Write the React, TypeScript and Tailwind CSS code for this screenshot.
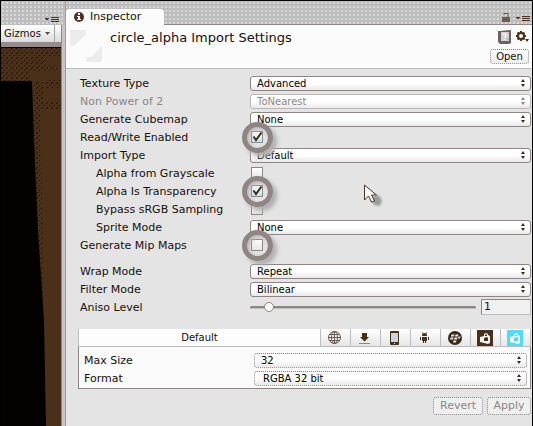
import type { ReactNode } from "react";
import { useState } from "react";

const dots =
  "bg-[#bdbdbd] bg-[radial-gradient(circle,#d8d8d8_1px,transparent_1px)] bg-[size:4px_4px]";

function Arrows() {
  return (
    <svg width="4" height="8" viewBox="0 0 4 8" fill="currentColor" className="pointer-events-none absolute right-[6px]" aria-hidden="true">
      <path d="M2 0L4 3H0zM0 5h4L2 8z" />
    </svg>
  );
}

function MenuLines() {
  return (
    <svg width="14" height="6" viewBox="0 0 14 6" fill="#4a3322" shapeRendering="crispEdges" aria-hidden="true">
      <path d="M0 1h4v1H3v1H1V2H0zM6 0h8v1H6zM6 2h8v1H6zM6 4h8v1H6z" />
    </svg>
  );
}

function Dropdown({ id, value, disabled = false, dotted = false, inset = false }: { id: string; value: string; disabled?: boolean; dotted?: boolean; inset?: boolean }) {
  return (
    <div className={`relative flex min-w-0 flex-1 items-center ${disabled ? "text-[#8f8583]" : "text-[#3c2a1c]"}`}>
      <select
        id={id}
        disabled={disabled}
        className={`h-[15px] w-full appearance-none rounded-[3px] border bg-linear-to-b from-white from-50% to-[#e9e9e9] text-[10px] leading-[13px] ${dotted ? "border-dotted" : ""} ${inset ? "pl-2" : "pl-[6px]"} ${disabled ? "border-[#bdb8b7] text-[#8f8583] opacity-100" : "border-[#8f8583] text-black"}`}
      >
        <option>{value}</option>
      </select>
      <Arrows />
    </div>
  );
}

function Row({ id, label, indent = false, muted = false, children }: { id: string; label: string; indent?: boolean; muted?: boolean; children: ReactNode }) {
  return (
    <div className="flex h-[18px] items-center">
      <label htmlFor={id} className={`w-[170px] shrink-0 pt-[2px] whitespace-nowrap ${indent ? "pl-4" : ""} ${muted ? "text-[#8f8583]" : ""}`}>
        {label}
      </label>
      {children}
    </div>
  );
}

function Tick({ id, on = false, ringed = false }: { id: string; on?: boolean; ringed?: boolean }) {
  return (
    <span className="relative ml-px flex size-3 items-center justify-center">
      <input
        id={id}
        type="checkbox"
        defaultChecked={on}
        className="peer size-3 appearance-none border border-[#8f8583] bg-linear-to-b from-white to-[#e6e6e6] checked:to-[#bfe3ea]"
      />
      <svg viewBox="0 0 12 12" className="pointer-events-none absolute z-20 hidden size-3 peer-checked:block" aria-hidden="true">
        <path d="M2.5 5.5L5 9l5.5-7.5" fill="none" stroke="#3c2a1c" strokeWidth="2" />
      </svg>
      {ringed && (
        <span className="pointer-events-none absolute z-10 size-[31px] rounded-full border-[5px] border-[#8f8583] shadow-[4px_4px_4px_#b0b0b0,inset_2px_2px_4px_#b5b5b5]" />
      )}
    </span>
  );
}

function Tab({ label, children }: { label: string; children: ReactNode }) {
  return (
    <button type="button" aria-label={label} className="flex w-[30px] items-center justify-center border-l border-[#bdbdbd] bg-linear-to-b from-white to-[#e6e6e6] pr-[2px]">
      {children}
    </button>
  );
}

function BagIcon({ back }: { back: string }) {
  return (
    <svg width="16" height="16" viewBox="0 0 16 16" aria-hidden="true">
      <path d="M0 0h16v16H0z" fill={back} />
      <path d="M3 7l4-1V4l2-1 2 1v1l2 1v7l-2 1-4-1-4-1z" fill="#f4f4f4" />
      <path d="M8 5l1-1 1 1v1H8zM7 8l3-1 1 1v3H7z" fill={back} />
    </svg>
  );
}

function PlatformTabs() {
  return (
    <div className="flex h-[18px] border-r border-b border-l border-[#bdbdbd]">
      <button type="button" className="flex-1 bg-[#fdfdfd] text-[10px]">Default</button>
      <Tab label="Web player">
        <svg width="13" height="13" viewBox="0 0 13 13" fill="none" stroke="#6b5a50" aria-hidden="true">
          <circle cx="6.5" cy="6.5" r="6" />
          <path d="M6.5 0v13M0 6.5h13M1.5 3.5h10M1.5 9.5h10" />
          <ellipse cx="6.5" cy="6.5" rx="3" ry="6" />
        </svg>
      </Tab>
      <Tab label="Standalone">
        <svg width="11" height="12" viewBox="0 0 11 12" aria-hidden="true">
          <path d="M3 1h5v4h2L5.5 9.5 1 5h2z" fill="#4a3019" />
          <path d="M0 11.5h11" stroke="#8f8583" />
        </svg>
      </Tab>
      <Tab label="iOS">
        <svg width="9" height="14" viewBox="0 0 9 14" aria-hidden="true">
          <rect width="9" height="14" rx="1" fill="#4a3019" />
          <path d="M1 2h7v9H1z" fill="#cfd3d4" />
          <path d="M4 12h1v1H4z" fill="#ddd" />
        </svg>
      </Tab>
      <Tab label="Android">
        <svg width="9" height="12" viewBox="0 0 9 12" fill="#4a3019" aria-hidden="true">
          <path d="M2 4q0-3 2.5-3T7 4zM2 5h5v4H6v2H5V9H4v2H3V9H2zM0 5h1v3H0zM8 5h1v3H8zM2 0l1 1-1 1zM7 0v2L6 1z" />
        </svg>
      </Tab>
      <Tab label="BlackBerry">
        <svg width="14" height="14" viewBox="0 0 14 14" aria-hidden="true">
          <circle cx="7" cy="7" r="7" fill="#3a2818" />
          <path d="M3.5 3.5h3l-.5 2H3zM7.5 3.5h3l-.5 2H7zM2.5 6.5h3l-.5 2H2zM6.5 6.5h3l-.5 2H6zM10.5 5.5h2l-.5 2h-2zM5.5 9.5h3l-.5 2H5z" fill="#e8e8e8" />
        </svg>
      </Tab>
      <Tab label="Windows Store"><BagIcon back="#4a3019" /></Tab>
      <Tab label="Windows Phone"><BagIcon back="#4fdcf5" /></Tab>
    </div>
  );
}

function ScenePane() {
  return (
    <section aria-label="Scene" className={`flex w-[61px] shrink-0 flex-col border-l border-black ${dots}`}>
      <div className="flex h-6 items-end justify-end pr-[2px] pb-[2px]"><MenuLines /></div>
      <div className="flex h-[17px] items-center bg-linear-to-b from-white to-[#dcdcdc] pl-[3px] text-[10px]">
        <button type="button" className="flex h-full items-center">
          Gizmos
          <svg width="5" height="3" viewBox="0 0 5 3" fill="#5a4a40" className="ml-1" aria-hidden="true"><path d="M0 0h5L2.5 3z" /></svg>
        </button>
        <span className="ml-1 h-full border-l border-[#a8a3a2]" />
      </div>
      <div className="h-[5px] bg-[#968b88]" />
      <div className="flex flex-1 border-t border-black bg-[#4a3019]">
        <svg viewBox="0 0 60 378" preserveAspectRatio="none" className="h-full w-full" aria-hidden="true">
          <defs>
            <pattern id="grain" width="5" height="5" patternUnits="userSpaceOnUse">
              <path d="M0 0h1v1H0zM3 2h1v1H3zM1 4h1v1H1z" fill="#1a1008" />
            </pattern>
          </defs>
          <path d="M0 0h60v8H44v8h12v8H30v10H0zM32 34h10v20h18v8H40v20h-8zM44 32h16v8H44zM32 82h8l4 296H32z" fill="url(#grain)" />
          <path d="M0 33h31l2 60 4 90 6 90 2 105H0z" fill="#030200" />
        </svg>
      </div>
    </section>
  );
}

export default function App() {
  const [aniso, setAniso] = useState(1);
  return (
    <div className={`flex min-h-screen overflow-hidden border-t border-r border-b border-black font-['DejaVu_Sans',sans-serif] text-[11px] leading-4 text-[#17100b] ${dots}`}>
      <ScenePane />
      <div className="mt-6 w-1 shrink-0 border-l border-[#8f8583] bg-[#c6c4c4]" />
      <main className="flex min-w-0 flex-1 flex-col border-l border-[#a39b99]">
        <div className="flex h-6 items-end justify-between border-b border-[#8f8583]">
          <h1 className="-mb-px flex h-4 w-[98px] items-center gap-[6px] rounded-t-[4px] bg-[#fbfbfb] pl-2">
            <svg width="10" height="10" viewBox="0 0 10 10" aria-hidden="true">
              <circle cx="5" cy="5" r="5" fill="#4a3322" />
              <path d="M4 1h2v2H4zM3 4h3v3h1v1H3V7h1V5H3z" fill="#fff" />
            </svg>
            Inspector
          </h1>
          <div className="flex items-end gap-[6px] pr-[2px] pb-[2px]">
            <svg width="8" height="9" viewBox="0 0 8 9" aria-hidden="true">
              <path d="M2 2V.5h4V5" fill="none" stroke="#6b5a50" />
              <path d="M0 4h8v5H0z" fill="#6b5c53" />
            </svg>
            <MenuLines />
          </div>
        </div>

        <header className="flex h-11 justify-between border-b border-[#bdbdbd] bg-[#fbfbfb] pr-[3px] pl-1">
          <div className="flex gap-2">
            <svg width="32" height="32" viewBox="0 0 32 32" fill="#ececec" className="mt-[5px]" aria-hidden="true">
              <path d="M0 0h16v4L4 16H0zM32 16v16H16v-5h5l11-11z" />
            </svg>
            <h2 className="mt-[5px] text-[13px] leading-4 whitespace-nowrap">circle_alpha Import Settings</h2>
          </div>
          <div className="flex flex-col items-end justify-between pt-[5px] pb-1">
            <div className="flex items-center gap-[5px]">
              <svg width="13" height="14" viewBox="0 0 13 14" aria-hidden="true">
                <path d="M0 1h2l11-1v13l-2 1H2l-2-2z" fill="#6e625c" />
                <path d="M3 2h8v9H3z" fill="#d3d3d3" />
                <path d="M5 5V4h3v2H7v2M6.5 9v1" fill="none" stroke="#fff" />
                <path d="M9 8h2v2H9z" fill="#76d5e5" />
              </svg>
              <svg width="13" height="12" viewBox="0 0 13 12" aria-hidden="true">
                <circle cx="5" cy="5" r="3" fill="none" stroke="#4a3019" strokeWidth="2" />
                <path d="M5 0v2M5 8v2M0 5h2M8 5h2M1.5 1.5l1 1M8.5 1.5l-1 1M1.5 8.5l1-1M8.5 8.5l-1-1" stroke="#4a3019" strokeWidth="2" />
                <path d="M9 8h4l-2 3z" fill="#4a3019" />
              </svg>
            </div>
            <button type="button" className="h-[15px] w-[39px] rounded-[3px] border border-dotted border-[#8f8583] bg-linear-to-b from-white to-[#eee] text-[10px] leading-[13px]">Open</button>
          </div>
        </header>

        <form className="flex flex-1 flex-col bg-[#e4e4e4] pt-[5px] pl-3">
          <div className="pr-px pl-[2px]">
            <Row id="texture" label="Texture Type"><Dropdown id="texture" value="Advanced" /></Row>
            <Row id="npot" label="Non Power of 2" muted><Dropdown id="npot" value="ToNearest" disabled /></Row>
            <Row id="cubemap" label="Generate Cubemap"><Dropdown id="cubemap" value="None" /></Row>
            <Row id="readwrite" label="Read/Write Enabled"><Tick id="readwrite" on ringed /></Row>
            <Row id="import" label="Import Type"><Dropdown id="import" value="Default" /></Row>
            <Row id="grayscale" label="Alpha from Grayscale" indent><Tick id="grayscale" /></Row>
            <Row id="transparency" label="Alpha Is Transparency" indent><Tick id="transparency" on ringed /></Row>
            <Row id="srgb" label="Bypass sRGB Sampling" indent><Tick id="srgb" /></Row>
            <Row id="sprite" label="Sprite Mode" indent><Dropdown id="sprite" value="None" /></Row>
            <Row id="mipmaps" label="Generate Mip Maps"><Tick id="mipmaps" ringed /></Row>
            <div className="h-2" />
            <Row id="wrap" label="Wrap Mode"><Dropdown id="wrap" value="Repeat" /></Row>
            <Row id="filter" label="Filter Mode"><Dropdown id="filter" value="Bilinear" /></Row>
            <Row id="aniso" label="Aniso Level">
              <input
                id="aniso"
                type="range"
                min="0"
                max="16"
                value={aniso}
                onChange={(event) => setAniso(Number(event.target.value))}
                className="h-[3px] min-w-0 flex-1 appearance-none rounded-full border-b border-[#bdbdbd] bg-[#8f8583] [&::-webkit-slider-thumb]:size-[10px] [&::-webkit-slider-thumb]:appearance-none [&::-webkit-slider-thumb]:rounded-full [&::-webkit-slider-thumb]:border [&::-webkit-slider-thumb]:border-solid [&::-webkit-slider-thumb]:border-[#8f8583] [&::-webkit-slider-thumb]:bg-[#fbfbfb]"
              />
              <input
                aria-label="Aniso Level value"
                value={aniso}
                onChange={(event) => setAniso(Number(event.target.value) || 0)}
                className="ml-[5px] h-4 w-[50px] border border-[#bdbdbd] border-t-[#8f8583] border-l-[#8f8583] bg-[#f0f0f0] pl-[2px] text-[11px]"
              />
            </Row>
          </div>

          <section aria-label="Platform settings" className="mt-[13px] mr-px">
            <PlatformTabs />
            <div className="border-r border-b border-l border-[#8f8583] bg-[#fbfbfb] pt-1 pr-[3px] pb-[1px] pl-[5px]">
              <Row id="max" label="Max Size"><Dropdown id="max" value="32" dotted /></Row>
              <Row id="format" label="Format"><Dropdown id="format" value="RGBA 32 bit" dotted inset /></Row>
            </div>
          </section>

          <div className="mt-2 mr-px flex justify-end gap-1 text-[#8f8583]">
            <button type="button" disabled className="h-[18px] w-[50px] rounded-[3px] border border-dotted border-[#8f8583] bg-[#efefef]">Revert</button>
            <button type="button" disabled className="h-[18px] w-11 rounded-[3px] border border-dotted border-[#8f8583] bg-[#efefef]">Apply</button>
          </div>
        </form>
      </main>

      <svg width="28" height="28" viewBox="0 0 28 28" className="pointer-events-none absolute top-[184px] left-[364px]" aria-hidden="true">
        <defs>
          <filter id="soft"><feGaussianBlur stdDeviation="1.2" /></filter>
        </defs>
        <path d="M6 13l8-2 4 5-2 6-6-1z" fill="#9a9a9a" filter="url(#soft)" />
        <path d="M.5 1v15l4-4 3 6 3-1-3-6h5z" fill="#fbfbfb" stroke="#4a3322" />
      </svg>
    </div>
  );
}
